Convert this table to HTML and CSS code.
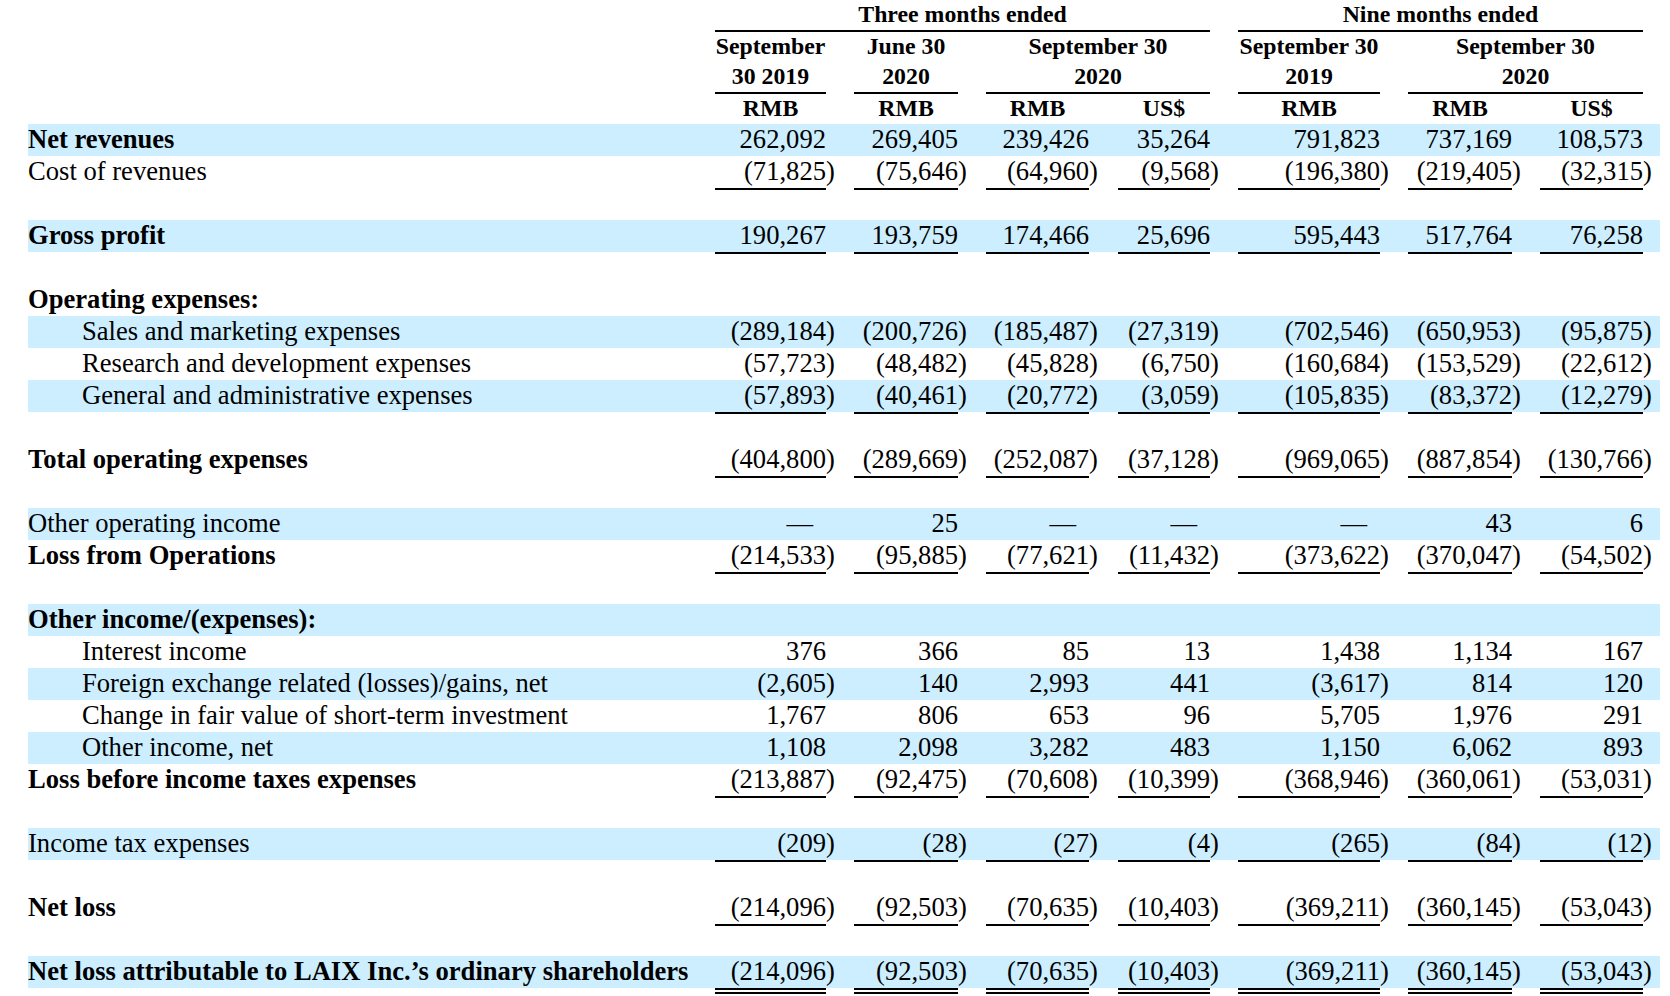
FILE: index.html
```html
<!DOCTYPE html>
<html lang="en">
<head>
    <meta charset="UTF-8">
    <meta name="viewport" content="width=device-width, initial-scale=1.0">
    <title>LAIX Inc. - Statements of Operations</title>
    <link rel="stylesheet" href="styles.css">
</head>
<body>
<div class="sheet">
    <table class="stmt">
        <colgroup>
            <col class="w-lbl">
            <col class="w-n1"><col class="w-gap">
            <col class="w-n2"><col class="w-gap">
            <col class="w-n3"><col class="w-gap3">
            <col class="w-n4"><col class="w-gap">
            <col class="w-n5"><col class="w-gap">
            <col class="w-n6"><col class="w-gap">
            <col class="w-n7"><col class="w-end">
        </colgroup>

        <!-- period headings -->
        <tr class="h-period">
            <td></td>
            <td colspan="7" class="hd rule">Three months ended</td>
            <td></td>
            <td colspan="5" class="hd rule">Nine months ended</td>
            <td></td>
        </tr>
        <tr class="h-dates">
            <td></td>
            <td class="hd rule">September<br>30 2019</td><td></td>
            <td class="hd rule">June 30<br>2020</td><td></td>
            <td colspan="3" class="hd rule">September 30<br>2020</td><td></td>
            <td class="hd rule">September 30<br>2019</td><td></td>
            <td colspan="3" class="hd rule">September 30<br>2020</td><td></td>
        </tr>
        <tr class="h-cur">
            <td></td>
            <td class="hd">RMB</td><td></td>
            <td class="hd">RMB</td><td></td>
            <td class="hd">RMB</td><td></td>
            <td class="hd">US$</td><td></td>
            <td class="hd">RMB</td><td></td>
            <td class="hd">RMB</td><td></td>
            <td class="hd">US$</td><td></td>
        </tr>

        <tr class="band">
            <td class="lbl b">Net revenues</td>
            <td class="num">262,092</td><td></td>
            <td class="num">269,405</td><td></td>
            <td class="num">239,426</td><td></td>
            <td class="num">35,264</td><td></td>
            <td class="num">791,823</td><td></td>
            <td class="num">737,169</td><td></td>
            <td class="num">108,573</td><td></td>
        </tr>
        <tr class="ul">
            <td class="lbl">Cost of revenues</td>
            <td class="num">(71,825</td><td>)</td>
            <td class="num">(75,646</td><td>)</td>
            <td class="num">(64,960</td><td>)</td>
            <td class="num">(9,568</td><td>)</td>
            <td class="num">(196,380</td><td>)</td>
            <td class="num">(219,405</td><td>)</td>
            <td class="num">(32,315</td><td>)</td>
        </tr>
        <tr><td colspan="15"></td></tr>
        <tr class="band ul">
            <td class="lbl b">Gross profit</td>
            <td class="num">190,267</td><td></td>
            <td class="num">193,759</td><td></td>
            <td class="num">174,466</td><td></td>
            <td class="num">25,696</td><td></td>
            <td class="num">595,443</td><td></td>
            <td class="num">517,764</td><td></td>
            <td class="num">76,258</td><td></td>
        </tr>
        <tr><td colspan="15"></td></tr>

        <!-- operating expenses -->
        <tr>
            <td class="lbl b" colspan="15">Operating expenses:</td>
        </tr>
        <tr class="band">
            <td class="lbl ind">Sales and marketing expenses</td>
            <td class="num">(289,184</td><td>)</td>
            <td class="num">(200,726</td><td>)</td>
            <td class="num">(185,487</td><td>)</td>
            <td class="num">(27,319</td><td>)</td>
            <td class="num">(702,546</td><td>)</td>
            <td class="num">(650,953</td><td>)</td>
            <td class="num">(95,875</td><td>)</td>
        </tr>
        <tr>
            <td class="lbl ind">Research and development expenses</td>
            <td class="num">(57,723</td><td>)</td>
            <td class="num">(48,482</td><td>)</td>
            <td class="num">(45,828</td><td>)</td>
            <td class="num">(6,750</td><td>)</td>
            <td class="num">(160,684</td><td>)</td>
            <td class="num">(153,529</td><td>)</td>
            <td class="num">(22,612</td><td>)</td>
        </tr>
        <tr class="band ul">
            <td class="lbl ind">General and administrative expenses</td>
            <td class="num">(57,893</td><td>)</td>
            <td class="num">(40,461</td><td>)</td>
            <td class="num">(20,772</td><td>)</td>
            <td class="num">(3,059</td><td>)</td>
            <td class="num">(105,835</td><td>)</td>
            <td class="num">(83,372</td><td>)</td>
            <td class="num">(12,279</td><td>)</td>
        </tr>
        <tr><td colspan="15"></td></tr>
        <tr class="ul">
            <td class="lbl b">Total operating expenses</td>
            <td class="num">(404,800</td><td>)</td>
            <td class="num">(289,669</td><td>)</td>
            <td class="num">(252,087</td><td>)</td>
            <td class="num">(37,128</td><td>)</td>
            <td class="num">(969,065</td><td>)</td>
            <td class="num">(887,854</td><td>)</td>
            <td class="num">(130,766</td><td>)</td>
        </tr>
        <tr><td colspan="15"></td></tr>
        <tr class="band">
            <td class="lbl">Other operating income</td>
            <td class="num nil">&mdash;</td><td></td>
            <td class="num">25</td><td></td>
            <td class="num nil">&mdash;</td><td></td>
            <td class="num nil">&mdash;</td><td></td>
            <td class="num nil">&mdash;</td><td></td>
            <td class="num">43</td><td></td>
            <td class="num">6</td><td></td>
        </tr>
        <tr class="ul">
            <td class="lbl b">Loss from Operations</td>
            <td class="num">(214,533</td><td>)</td>
            <td class="num">(95,885</td><td>)</td>
            <td class="num">(77,621</td><td>)</td>
            <td class="num">(11,432</td><td>)</td>
            <td class="num">(373,622</td><td>)</td>
            <td class="num">(370,047</td><td>)</td>
            <td class="num">(54,502</td><td>)</td>
        </tr>
        <tr><td colspan="15"></td></tr>

        <!-- other income -->
        <tr class="band">
            <td class="lbl b" colspan="15">Other income/(expenses):</td>
        </tr>
        <tr>
            <td class="lbl ind">Interest income</td>
            <td class="num">376</td><td></td>
            <td class="num">366</td><td></td>
            <td class="num">85</td><td></td>
            <td class="num">13</td><td></td>
            <td class="num">1,438</td><td></td>
            <td class="num">1,134</td><td></td>
            <td class="num">167</td><td></td>
        </tr>
        <tr class="band">
            <td class="lbl ind">Foreign exchange related (losses)/gains, net</td>
            <td class="num">(2,605</td><td>)</td>
            <td class="num">140</td><td></td>
            <td class="num">2,993</td><td></td>
            <td class="num">441</td><td></td>
            <td class="num">(3,617</td><td>)</td>
            <td class="num">814</td><td></td>
            <td class="num">120</td><td></td>
        </tr>
        <tr>
            <td class="lbl ind">Change in fair value of short-term investment</td>
            <td class="num">1,767</td><td></td>
            <td class="num">806</td><td></td>
            <td class="num">653</td><td></td>
            <td class="num">96</td><td></td>
            <td class="num">5,705</td><td></td>
            <td class="num">1,976</td><td></td>
            <td class="num">291</td><td></td>
        </tr>
        <tr class="band">
            <td class="lbl ind">Other income, net</td>
            <td class="num">1,108</td><td></td>
            <td class="num">2,098</td><td></td>
            <td class="num">3,282</td><td></td>
            <td class="num">483</td><td></td>
            <td class="num">1,150</td><td></td>
            <td class="num">6,062</td><td></td>
            <td class="num">893</td><td></td>
        </tr>
        <tr class="ul">
            <td class="lbl b">Loss before income taxes expenses</td>
            <td class="num">(213,887</td><td>)</td>
            <td class="num">(92,475</td><td>)</td>
            <td class="num">(70,608</td><td>)</td>
            <td class="num">(10,399</td><td>)</td>
            <td class="num">(368,946</td><td>)</td>
            <td class="num">(360,061</td><td>)</td>
            <td class="num">(53,031</td><td>)</td>
        </tr>
        <tr><td colspan="15"></td></tr>
        <tr class="band ul">
            <td class="lbl">Income tax expenses</td>
            <td class="num">(209</td><td>)</td>
            <td class="num">(28</td><td>)</td>
            <td class="num">(27</td><td>)</td>
            <td class="num">(4</td><td>)</td>
            <td class="num">(265</td><td>)</td>
            <td class="num">(84</td><td>)</td>
            <td class="num">(12</td><td>)</td>
        </tr>
        <tr><td colspan="15"></td></tr>
        <tr class="ul">
            <td class="lbl b">Net loss</td>
            <td class="num">(214,096</td><td>)</td>
            <td class="num">(92,503</td><td>)</td>
            <td class="num">(70,635</td><td>)</td>
            <td class="num">(10,403</td><td>)</td>
            <td class="num">(369,211</td><td>)</td>
            <td class="num">(360,145</td><td>)</td>
            <td class="num">(53,043</td><td>)</td>
        </tr>
        <tr><td colspan="15"></td></tr>
        <tr class="band dbl">
            <td class="lbl b">Net loss attributable to LAIX Inc.&rsquo;s ordinary shareholders</td>
            <td class="num">(214,096</td><td>)</td>
            <td class="num">(92,503</td><td>)</td>
            <td class="num">(70,635</td><td>)</td>
            <td class="num">(10,403</td><td>)</td>
            <td class="num">(369,211</td><td>)</td>
            <td class="num">(360,145</td><td>)</td>
            <td class="num">(53,043</td><td>)</td>
        </tr>
    </table>
</div>
</body>
</html>
```

FILE: styles.css
```css
body {
    margin: 0;
    background-color: #fff;
    color: #000;
    font-family: "Liberation Serif", "Times New Roman", serif;
}

.sheet {
    padding-left: 28px;
}

/* statement table */
.stmt {
    border-collapse: separate;
    border-spacing: 0;
    table-layout: fixed;
    width: 1632px;
    font-size: 26.6px;
}
.stmt tr {
    height: 32px;
}
.stmt td {
    padding: 0;
    line-height: 30px;
    vertical-align: top;
    white-space: nowrap;
}

/* column widths */
.w-lbl { width: 687px; }
.w-n1 { width: 111px; }
.w-n2 { width: 104px; }
.w-n3 { width: 103px; }
.w-n4 { width: 92px; }
.w-n5 { width: 142px; }
.w-n6 { width: 104px; }
.w-n7 { width: 103px; }
.w-gap { width: 28px; }
.w-gap3 { width: 29px; }
.w-end { width: 17px; }

/* headings */
.stmt .hd {
    font-size: 23.8px;
    font-weight: bold;
    text-align: center;
}
.stmt .h-period {
    height: 30px;
}
.stmt .h-period td {
    padding-top: 1px;
    line-height: 27px;
}
.stmt .h-dates {
    height: 62px;
}
.stmt .h-dates td {
    padding-top: 2px;
    line-height: 29.5px;
}
.stmt .h-cur td {
    padding-top: 1px;
    line-height: 30px;
}
.stmt .rule {
    box-shadow: 0 2px 0 #000;
}

/* body rows */
.band td {
    background-color: #cceeff;
}
.lbl.b {
    font-weight: bold;
}
.lbl.ind {
    padding-left: 54px;
}
.num {
    text-align: right;
}
.num.nil {
    padding-right: 13px;
}
.ul .num {
    box-shadow: 0 2px 0 #000;
}

/* double rule under the last line */
.stmt .dbl {
    height: 38px;
}
.dbl td {
    border-bottom: 6px solid transparent;
    background-clip: padding-box;
}
.dbl td.num {
    border-bottom: 6px double #000;
}
```
